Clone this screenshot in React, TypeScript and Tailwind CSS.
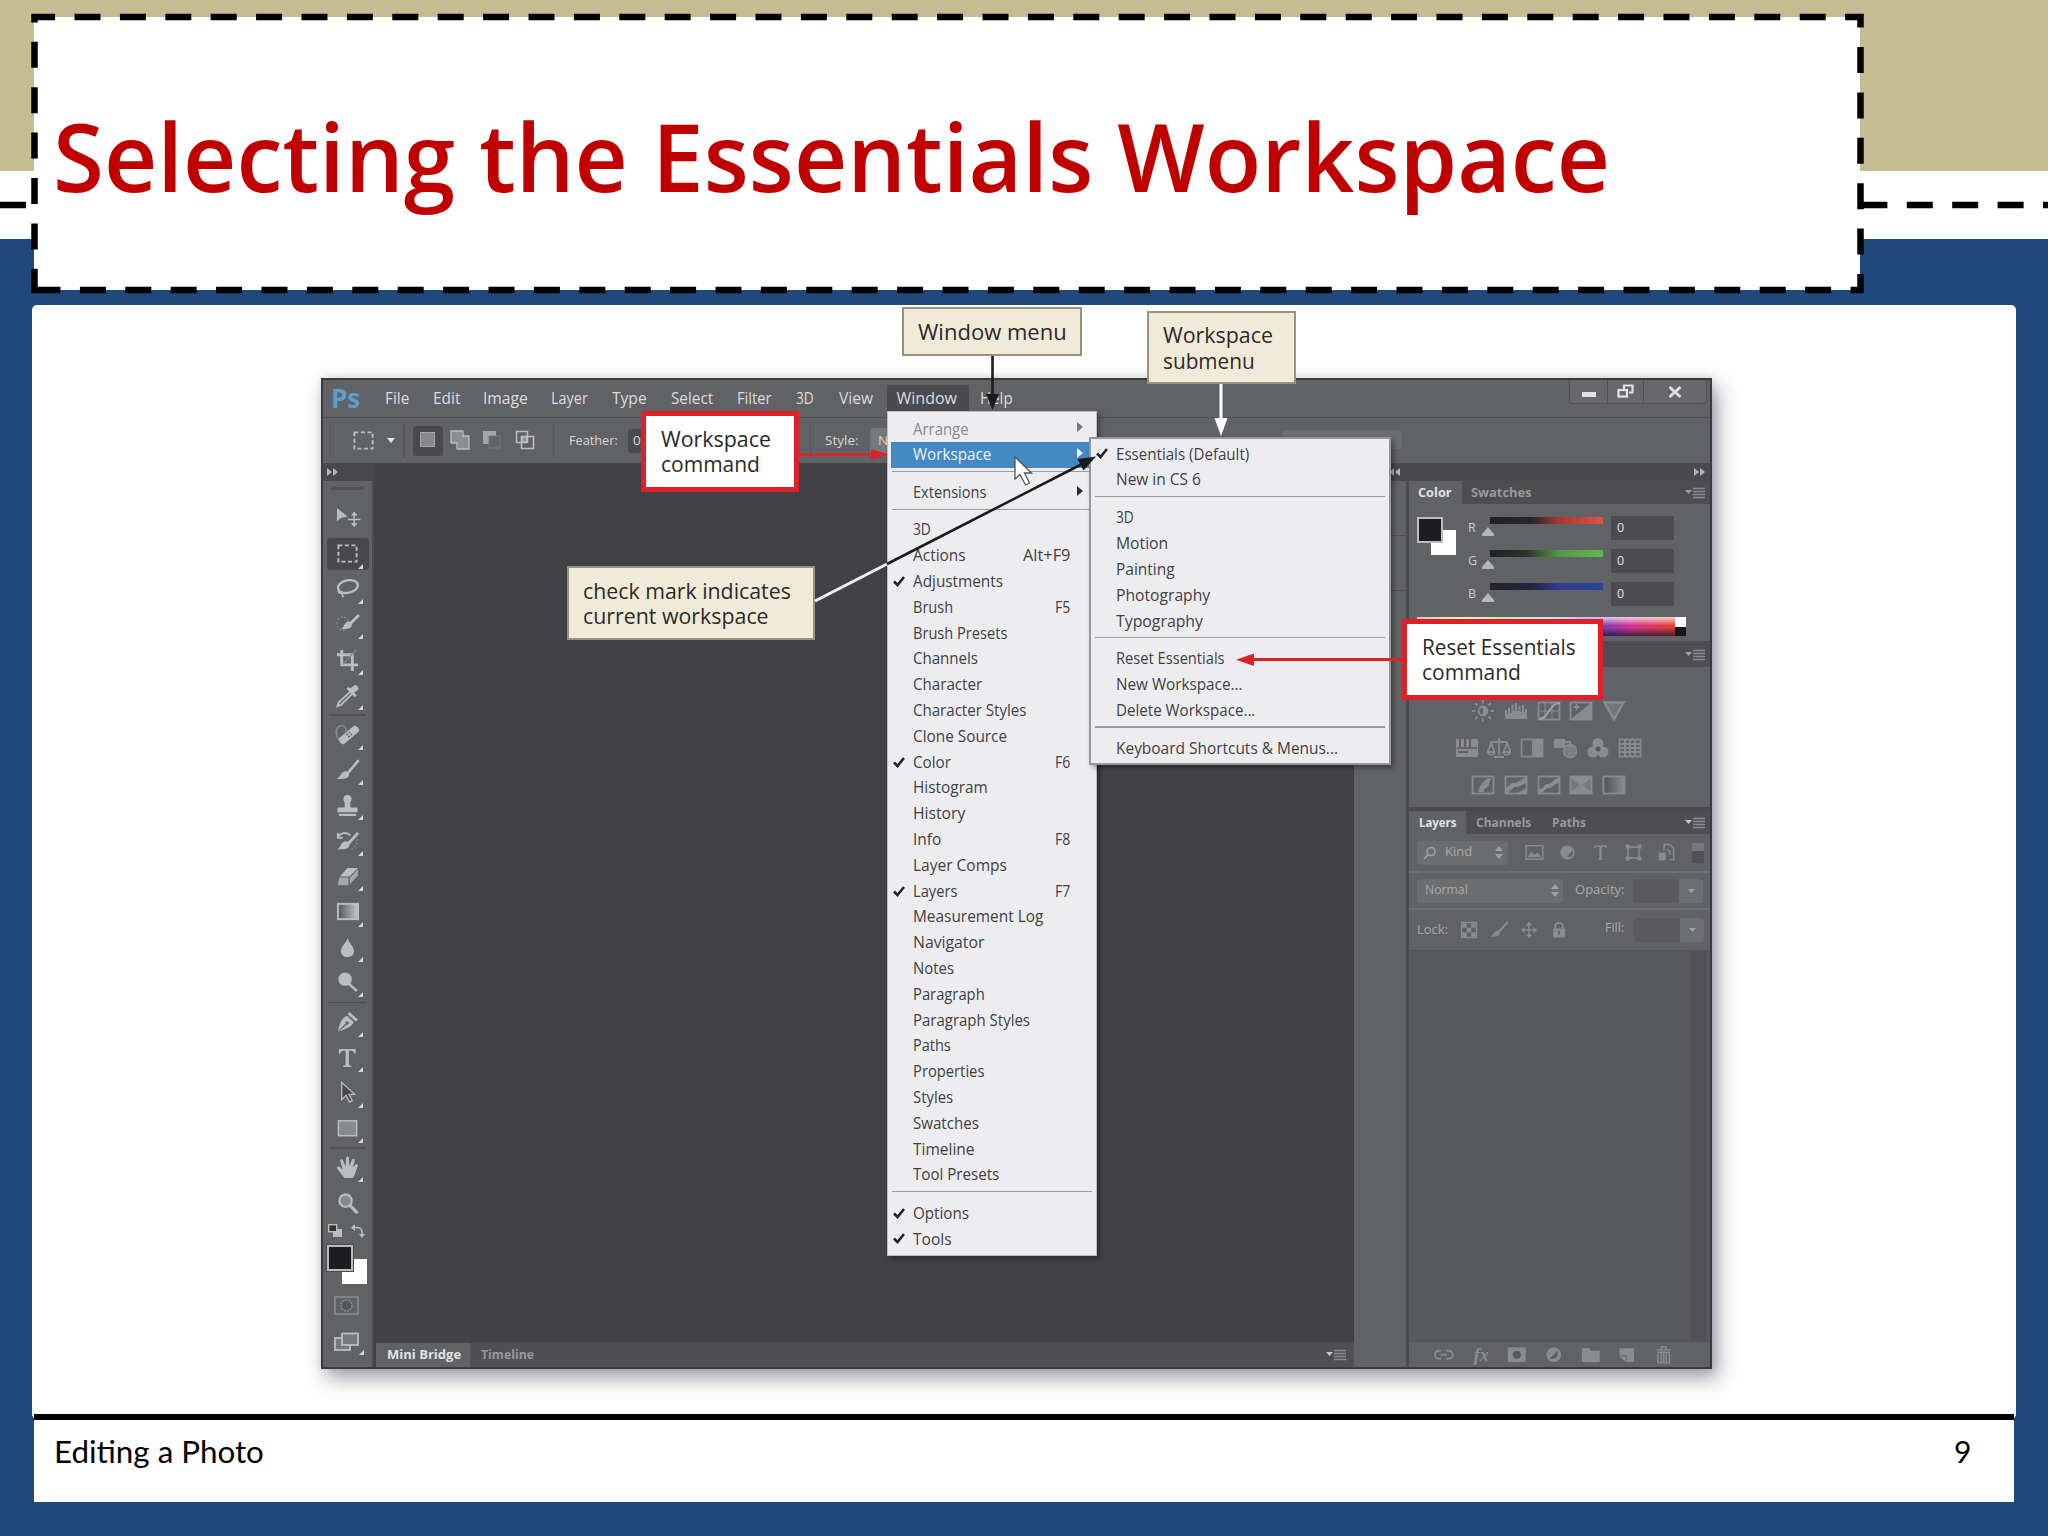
import React, { useLayoutEffect, useRef, useState } from "react";

/* Text stretched horizontally to a known width. */
function Fit({ w, children }: { w: number; children: React.ReactNode }) {
  const ref = useRef<HTMLSpanElement>(null);
  const [scale, setScale] = useState(1);
  useLayoutEffect(() => {
    if (ref.current) setScale(w / ref.current.offsetWidth);
  }, [w]);
  return (
    <span className="inline-block shrink-0 whitespace-nowrap text-left" style={{ width: w }}>
      <span ref={ref} className="inline-block origin-left" style={{ transform: `scaleX(${scale})` }}>
        {children}
      </span>
    </span>
  );
}

const L = "#bcbdbf";
const D = "#8b8c8f";

function Icon({ children, size = 24, className = "" }: { children: React.ReactNode; size?: number; className?: string }) {
  return (
    <svg width={size} height={size} viewBox="0 0 24 24" fill="none" className={"block shrink-0 " + className}>
      {children}
    </svg>
  );
}

const marquee = <rect x="2.5" y="3.5" width="19" height="17" stroke={L} strokeWidth="2" strokeDasharray="4.2 2.6" />;
const brush = (
  <>
    <path d="M23 2 12.5 14.5" stroke={L} strokeWidth="2.6" strokeLinecap="round" />
    <path d="M12.5 13.5c2 2.5 1 5.500-2 6.500-3 1-7 1-10 .5 3-1 3-2 5-5 1.500-2.500 5-3.500 7-2z" fill={L} />
  </>
);

const tools: ({ icon: React.ReactNode; selected?: boolean; flyout?: boolean } | "sep")[] = [
  { icon: <><path d="M1 1v14l4-3.500 7-1.500z" fill={L} /><path d="M19 6.500v13M12.500 13h13M19 6l-2 2.500h4zM19 20l-2-2.500h4z" stroke={L} strokeWidth="1.500" /></> },
  { icon: marquee, selected: true, flyout: true },
  { icon: <><ellipse cx="12.500" cy="9" rx="10.500" ry="6.500" stroke={L} strokeWidth="2.400" transform="rotate(-12 12 9)" /><path d="M3 12c-2 3 2 5 4 3M5.500 14l2 6" stroke={L} strokeWidth="1.800" /></>, flyout: true },
  { icon: <><ellipse cx="7" cy="11" rx="6" ry="7" stroke={D} strokeWidth="1.400" strokeDasharray="2 2" /><path d="M24 2 15 11" stroke={L} strokeWidth="3" /><path d="M15 9.500c3 3 1 6-2 6.800-3 .7-5 .7-8 0 3-1 2.500-2.500 4.500-5 1.500-2 4-3 5.500-1.800z" fill={L} /></>, flyout: true },
  { icon: <><path d="M6 1v15.500h17M1 6h16v17" stroke={L} strokeWidth="3" /><path d="M7 16 21 1" stroke={D} strokeWidth="1.300" /></>, flyout: true },
  { icon: <><path d="m15 8-12 11-1.500 4 4-1.500L17 10" stroke={L} strokeWidth="2" /><path d="m11 5 9 9 1.500-2-2.500-3 4-3c1.500-2-2-6-4-4.500l-4 3-2-1.500z" fill={L} /></>, flyout: true },
  "sep",
  { icon: <><path d="M9 19C-2 20-2 3 5 3c4-1 6 2 5 6" stroke={D} strokeWidth="1.600" /><rect x="1.500" y="8.500" width="24" height="8" rx="3" fill={L} transform="rotate(-40 13.500 12.500)" /><g fill="#66676a"><circle cx="11.500" cy="12" r="1" /><circle cx="14" cy="10" r="1" /><circle cx="13.500" cy="14" r="1" /><circle cx="16" cy="12" r="1" /></g></>, flyout: true },
  { icon: brush, flyout: true },
  { icon: <><path d="M12 1c5 0 5 5 3 7.500V14h7.500v5h-21v-5H9V8.500C7 6 7 1 12 1zM3 20.500h18V23H3z" fill={L} /></>, flyout: true },
  { icon: <><path d="M2 6.500c4-4 9-4 13-1M2 3v5h5" stroke={L} strokeWidth="2" /><path d="M23 3 13 14" stroke={L} strokeWidth="3" /><path d="M13 12.500c3 3 0 7-4 7.500H1c3-1.500 3-3 5-6 2-2 5-3 7-1.500z" fill={L} /><path d="M22 9c1 6-2 10-8 12" stroke={D} strokeWidth="1.500" strokeDasharray="2 2" /></>, flyout: true },
  { icon: <><path d="M12 3h11l-9 9H4z" fill={L} /><path d="M3.500 13H13v8H1.500zM14.500 13 23 4.500V11l-8.500 9z" fill="#a6a7a9" /></>, flyout: true },
  { icon: <><defs><linearGradient id="gt"><stop stopColor="#55565a" /><stop offset="1" stopColor="#c4c5c7" /></linearGradient></defs><rect x="2" y="4" width="21" height="16" fill="url(#gt)" stroke={L} strokeWidth="2" /></>, flyout: true },
  { icon: <path d="M12 2c1 5 7 9 7 14a7 6 0 0 1-14 0c0-5 6-9 7-14z" fill={L} />, flyout: true },
  { icon: <><circle cx="9.500" cy="8.500" r="7" fill={L} /><path d="m13 13 9 8" stroke={L} strokeWidth="2.600" /></>, flyout: true },
  "sep",
  { icon: <><path d="m14 1 9 8-2.500 2-8.500-8zM11.500 5l7 6.500C16 18 9 18.500 2 22c1-7 3-14 9.500-17z" fill={L} /><path d="m2.500 21.500 8-8" stroke="#606164" strokeWidth="1.300" /><circle cx="11.500" cy="12.500" r="1.800" fill="#606164" /></>, flyout: true },
  { icon: <path d="M3 3h17.500v5H19c-.5-2-1-3-3-3h-2.500v14c0 1 1 1.500 2.500 1.500v1.500H7.500v-1.500c1.500 0 2.500-.5 2.500-1.500V5H7.500c-2 0-2.500 1-3 3H3z" fill={L} />, flyout: true },
  { icon: <path d="M6 1.500v18l4.500-4.500 3.500 7 3-1.500-3.500-6.500h6z" fill="#47474b" stroke={L} strokeWidth="1.300" />, flyout: true },
  { icon: <rect x="2.500" y="4" width="19" height="15.500" fill="#88898b" stroke={L} strokeWidth="1.600" />, flyout: true },
  "sep",
  { icon: <path d="M9 23c-2-2-5-7-8-10-1-2 2-3 4-.5L7 14 4.500 5.500C4 3 7 2.500 7.500 5L10 11l.5-8.500c0-2.500 3-2.500 3 0L14 11l2.500-7c1-2.200 3.500-1.200 3 1L17.500 12l2.500-3c1.500-1.500 3.500 0 2.500 2-2 5-2.500 9-5 12z" fill={L} />, flyout: true },
  { icon: <><circle cx="10" cy="9" r="6.500" fill="#88898b" stroke={L} strokeWidth="2.200" /><path d="m14.500 14 8 8" stroke={L} strokeWidth="3.400" /></> },
];

function Toolbar() {
  return (
    <div className="flex w-[51px] shrink-0 flex-col border-r-2 border-[#4d4d51] bg-[#606263]">
      <div className="mx-[8px] mt-[6px] h-[3px] shrink-0 bg-[#505054]" />
      <div className="flex flex-col pt-[10.900px]">
        {tools.map((t, i) =>
          t === "sep" ? (
            <div key={i} className="mx-[6px] flex h-[4px] shrink-0 items-center">
              <div className="h-[1.500px] w-full bg-[#505054]" />
            </div>
          ) : (
            <div key={i} className="relative flex h-[35.400px] shrink-0 items-center justify-center pr-[1px]">
              {t.selected && <div className="absolute left-[4px] top-[2px] h-[32px] w-[42px] rounded-[3px] bg-[#49494d]" />}
              <Icon size={23} className="relative overflow-visible">{t.icon}</Icon>
              {t.flyout && (
                <svg className="absolute bottom-[3px] right-[9px]" width="5" height="5"><path d="M5 0v5H0z" fill="#d8d8da" /></svg>
              )}
            </div>
          ),
        )}
      </div>
      <div className="mt-[1px] flex h-[18px] items-center justify-between pl-[5px] pr-[7px]">
        <svg width="14" height="13" viewBox="0 0 14 13"><rect x="5" y="5" width="9" height="8" fill={L} /><rect x=".7" y=".7" width="8" height="7" fill="#333" stroke={L} strokeWidth="1.400" /></svg>
        <svg width="14" height="14" viewBox="0 0 14 14" fill="none"><path d="M2 3.500h4c3 0 5 2 5 5V12" stroke={L} strokeWidth="1.600" /><path d="M0 3.500 4 0v7zM11 14 8 10h6z" fill={L} /></svg>
      </div>
      <div className="relative mt-[5px] h-[40px]">
        <div className="absolute left-[19px] top-[14px] h-[25px] w-[25px] bg-white" />
        <div className="absolute left-[4px] top-0 h-[26px] w-[26px] border-2 border-[#bdbdbf] bg-[#1d1d1f] ring-1 ring-[#4b4b4f]" />
      </div>
      <div className="mt-[11px] flex justify-center pr-[3px]">
        <svg width="25" height="19" viewBox="0 0 25 19" fill="none"><rect x="1" y="1" width="23" height="17" stroke={D} strokeWidth="1.600" /><circle cx="12.500" cy="9.500" r="5.500" fill="#55565a" stroke={D} strokeWidth="1.600" strokeDasharray="2 1" /></svg>
      </div>
      <div className="relative mt-[17px] flex justify-center pr-[3px]">
        <svg width="25" height="20" viewBox="0 0 25 20" fill="none"><rect x="1" y="6" width="15" height="12" fill="#77787a" stroke={L} strokeWidth="1.800" /><rect x="8" y="1.500" width="16" height="11.500" fill="#77787a" stroke={L} strokeWidth="1.800" /></svg>
        <svg className="absolute -bottom-[3px] right-[8px]" width="5" height="5"><path d="M5 0v5H0z" fill="#d8d8da" /></svg>
      </div>
    </div>
  );
}

const menus: [string, number, number][] = [
  ["File", 61.5, 24], ["Edit", 24, 27], ["Image", 23, 45], ["Layer", 23, 37], ["Type", 24, 35],
  ["Select", 24, 42], ["Filter", 24, 35], ["3D", 24, 18], ["View", 25, 34],
];

function MenuBar() {
  return (
    <div className="flex h-[38px] shrink-0 border-b border-[#505054] bg-[#616265] font-['Open_Sans',sans-serif] text-[16px] text-[#dcdcde]">
      <div className="flex h-[35px] items-center">
        <div className="-mr-[34px] w-[34px]">
          <span className="block pl-[8px] font-['Open_Sans',sans-serif] text-[26px] font-bold leading-[34px] text-[#5d9fcb]"><Fit w={29}>Ps</Fit></span>
        </div>
        {menus.map(([t, gap, w]) => (
          <span key={t} className="flex" style={{ marginLeft: gap }}><Fit w={w}>{t}</Fit></span>
        ))}
        <div className="ml-[14px] mt-[1px] flex h-[27px] w-[82px] items-center bg-[#4b4b4f] pl-[10px]"><Fit w={60}>Window</Fit></div>
        <span className="ml-[11px] flex"><Fit w={33}>Help</Fit></span>
      </div>
      <div className="ml-auto mr-[3px] flex h-[24px] gap-px rounded-b-[4px] bg-[#505054] px-px pb-px">
        <div className="flex w-[37px] items-end justify-center rounded-bl-[3px] bg-[#68686c] pb-[6px]"><div className="h-[5px] w-[14px] bg-[#e2e2e4]" /></div>
        <div className="flex w-[35px] items-center justify-center bg-[#68686c]">
          <svg width="17" height="15" viewBox="0 0 17 15" fill="none" stroke="#e2e2e4" strokeWidth="2.200"><path d="M7 5V1.500h8.500v7H12" /><rect x="1.500" y="6" width="8.500" height="6.500" /></svg>
        </div>
        <div className="flex w-[62px] items-center justify-center rounded-br-[3px] bg-[#68686c]">
          <svg width="14" height="12" viewBox="0 0 14 12"><path d="m1.500 1 11 10m0-10-11 10" stroke="#e2e2e4" strokeWidth="2.800" /></svg>
        </div>
      </div>
    </div>
  );
}

function OptionsBar() {
  return (
    <div className="flex h-[45px] shrink-0 items-center bg-[#616265] font-['Open_Sans',sans-serif] text-[13.500px] text-[#d6d6d8]">
      <div className="ml-[7px] h-[34px] w-px bg-[#58585b]" />
      <Icon size={23} className="ml-[21px]">{marquee}</Icon>
      <svg className="ml-[12px]" width="8" height="5"><path d="M0 0h8L4 5z" fill="#e4e4e6" /></svg>
      <div className="ml-[8px] h-[34px] w-[1.500px] bg-[#56565a]" />
      <div className="ml-[8px] flex h-[30px] w-[30px] items-center justify-center rounded-[3px] bg-[#49494d]"><div className="mb-[3px] h-[15px] w-[15px] border border-[#a8a8aa] bg-[#88898b]" /></div>
      <svg className="mb-[2px] ml-[7px]" width="20" height="20" viewBox="0 0 20 20"><path d="M1 1h12v5h6v13H7v-6H1z" fill="#8d8e90" stroke={L} strokeWidth="1.300" /></svg>
      <svg className="mb-[2px] ml-[12px]" width="20" height="20" viewBox="0 0 20 20"><path d="M1 1h13v5H7v8H1z" fill="#a4a5a7" /><path d="M7 6h11v12H7z" fill="none" stroke="#77787a" /></svg>
      <svg className="mb-[2px] ml-[13px]" width="20" height="20" viewBox="0 0 20 20" fill="none" stroke={L} strokeWidth="1.600"><path d="M1.500 1.500h11v11h-11zM6.500 6.500h12v12h-12z" /><path d="M7 7h5v5H7z" fill="#8d8e90" /></svg>
      <div className="ml-[18px] h-[34px] w-[1.500px] bg-[#56565a]" />
      <span className="ml-[15px] flex"><Fit w={49}>Feather:</Fit></span>
      <div className="ml-[10px] flex h-[24px] w-[120px] items-center rounded-[3px] bg-[#4b4b4f] pl-[5px]">0</div>
      <div className="ml-[62px] h-[34px] w-px bg-[#56565a]" />
      <span className="ml-[14px] flex"><Fit w={34}>Style:</Fit></span>
      <div className="ml-[11px] flex h-[26px] w-[120px] items-center rounded-[3px] bg-[#77787a] pl-[8px]">N</div>
      <div className="ml-[292px] mt-[12px] h-[19px] w-[120px] self-start rounded-t-[4px] bg-[#6c6d70]" />
    </div>
  );
}

function PanelMenu({ bright = false }: { bright?: boolean }) {
  return (
    <svg width="20" height="12" viewBox="0 0 20 12">
      <path d="M0 3h7L3.500 7z" fill={bright ? "#c9c9cb" : "#a0a1a3"} />
      <path d="M8 1.500h12M8 4.500h12M8 7.500h12M8 10.500h12" stroke="#8b8c8e" strokeWidth="1.500" />
    </svg>
  );
}

const sliders: [string, string][] = [
  ["R", "bg-[linear-gradient(90deg,#222226_0%,#2b2729_38%,#a83a32_62%,#e05245_100%)]"],
  ["G", "bg-[linear-gradient(90deg,#222226_0%,#2b332b_32%,#549a45_62%,#62b552_100%)]"],
  ["B", "bg-[linear-gradient(90deg,#222226_0%,#25254a_38%,#2f3c8c_62%,#2b43a0_100%)]"],
];

function ColorPanel() {
  return (
    <div className="h-[160px] shrink-0 font-['Open_Sans',sans-serif]">
      <div className="flex h-[23px] items-center bg-[#4e4e52] text-[12px] font-bold">
        <div className="flex h-full w-[53px] items-center bg-[#616265] pl-[9px] text-[#e2e2e4]"><Fit w={34}>Color</Fit></div>
        <span className="ml-[9px] flex text-[#98999c]"><Fit w={60}>Swatches</Fit></span>
        <span className="ml-auto mr-[5px]"><PanelMenu /></span>
      </div>
      <div className="flex pl-[8px] pt-[12px]">
        <div className="relative mt-[1px] h-[40px] w-[51px] shrink-0">
          <div className="absolute left-[14px] top-[13px] h-[25px] w-[25px] bg-white" />
          <div className="absolute left-0 top-0 h-[26px] w-[26px] border-2 border-[#bdbdbf] bg-[#1d1d1f]" />
        </div>
        <div className="flex flex-col gap-[9px]">
          {sliders.map(([c, bg]) => (
            <div key={c} className="flex h-[24px] items-start text-[12.500px] leading-[24px] text-[#cfcfd1]">
              <span className="w-[22px]">{c}</span>
              <div className="relative mt-[1px] h-[7px] w-[113px]">
                <div className={"h-full w-full " + bg} />
                <svg className="absolute -left-[8px] top-[10px]" width="12" height="9"><path d="M6 0 12 7v2H0V7z" fill="#b4b5b7" /></svg>
              </div>
              <div className="ml-[8px] h-[24px] w-[63px] bg-[#4c4c50] pl-[6px] text-[#e2e2e4]">0</div>
            </div>
          ))}
        </div>
      </div>
      <div className="ml-[8px] mt-[11px] flex h-[19px] w-[269px]">
        <div className="flex-1 bg-[linear-gradient(180deg,rgba(255,255,255,0.75)_0%,rgba(255,255,255,0)_45%,rgba(0,0,0,0)_55%,rgba(20,20,40,0.75)_100%),linear-gradient(90deg,#e33_0%,#ee3_16%,#3c3_33%,#3cc_50%,#44c_66%,#d2348f_83%,#e5402e_100%)]" />
        <div className="flex w-[11px] flex-col"><div className="h-1/2 bg-white" /><div className="h-1/2 bg-[#17171a]" /></div>
      </div>
    </div>
  );
}

const s = { stroke: D, strokeWidth: 1.8 };
const adjust: React.ReactNode[][] = [
  [
    <><circle cx="12" cy="12" r="4.500" {...s} /><path d="M12 7.500a4.500 4.500 0 0 1 0 9z" fill={D} /><path d="M12 1v3.500M12 19.500V23M1 12h3.500M19.500 12H23M4 4l2.500 2.500M17.500 17.500 20 20M4 20l2.500-2.500M17.500 6.500 20 4" {...s} /></>,
    <path d="M1 20v-9h2v4h1V9h2v5h1.500V6h2v6H11V4h2v8h1.500V7h2v6H18V6h2v7h1v-3h2v10z" fill={D} />,
    <><rect x="1.500" y="3.500" width="21" height="17" {...s} /><path d="M1 12h22M8 3v17M15 3v17" stroke={D} /><path d="M2 20c10 0 10-16 21-16" stroke="#a0a1a3" strokeWidth="2" /></>,
    <><rect x="1.500" y="3.500" width="21" height="17" {...s} /><path d="M2 20 22 4v16z" fill={D} /><path d="M4.500 8h6M7.500 5v6" {...s} /></>,
    <><path d="M1 2.500h22L12 22z" fill="#737477" /><path d="M2.500 3.500h19L12 20z" stroke={D} strokeWidth="2.400" /></>,
  ],
  [
    <><rect x="1" y="3" width="22" height="18" fill={D} /><path d="M5 3v8M10 3v8M15 3v8M2 12h20M3 16h10" stroke="#55565a" strokeWidth="1.600" /></>,
    <path d="M12 2v17M4 6h16M7 21h10M4 7l-3.500 9h7zM20 7l-3.500 9h7zM1 17c1 2.500 5.500 2.500 6.500 0M16.500 17c1 2.500 5.500 2.500 6.500 0" {...s} />,
    <><rect x="1.500" y="3.500" width="21" height="17" {...s} /><path d="M12 3h11v18H12z" fill={D} /></>,
    <><path d="M1 3h11v9H1z" fill={D} /><circle cx="17" cy="15" r="6.500" fill="#7d7e80" stroke={D} strokeWidth="1.500" /><path d="M8 6h9v5" {...s} /></>,
    <><circle cx="12" cy="7.500" r="5.500" fill={D} /><circle cx="7" cy="16" r="5.500" fill={D} /><circle cx="17" cy="16" r="5.500" fill={D} /><circle cx="12" cy="13" r="2.500" fill="#55565a" /></>,
    <><rect x="1.500" y="3.500" width="21" height="17" {...s} /><path d="M7 3v18M12 3v18M17 3v18M1 8h22M1 12h22M1 16h22" {...s} /></>,
  ],
  [
    <><rect x="1.500" y="3.500" width="21" height="17" {...s} /><path d="M20 5c-6 0-12 8-13 14h6c-1-5 4-3 5-8z" fill={D} /></>,
    <><rect x="1.500" y="3.500" width="21" height="17" {...s} /><path d="M2 20v-5l6-5h4l10-6v6l-8 4h-4l-6 6zM14 20l8-5v5z" fill={D} /></>,
    <><rect x="1.500" y="3.500" width="21" height="17" {...s} /><path d="M2 16c6 0 4-5 9-5s5-6 12-6v5c-6 0-6 5-11 5s-4 5-10 5z" fill={D} /></>,
    <><rect x="1.500" y="3.500" width="21" height="17" fill="#77787a" {...s} /><path d="M2 4l10 8L22 4M2 20l10-8 10 8z" fill={D} {...s} /></>,
    <><defs><linearGradient id="ga"><stop stopColor="#505154" /><stop offset="1" stopColor={D} /></linearGradient></defs><rect x="1.500" y="3.500" width="21" height="17" fill="url(#ga)" {...s} /></>,
  ],
];

function Spin() {
  return <svg width="8" height="13" viewBox="0 0 8 13"><path d="M0 5 4 0l4 5zM0 8l4 5 4-5z" fill="#9fa0a2" /></svg>;
}

function ValueField() {
  return (
    <div className="flex h-[24px] w-[70px] overflow-hidden rounded-[3px] bg-[#5a5a5d]">
      <div className="ml-auto flex w-[24px] items-center justify-center bg-[#6e6f71]"><svg width="7" height="4"><path d="M0 0h7L3.500 4z" fill="#a0a1a3" /></svg></div>
    </div>
  );
}

const filterIcons: React.ReactNode[] = [
  <><rect x="1.500" y="3.500" width="21" height="17" {...s} /><path d="m3 18 5-7 4 4 4-3 5 6z" fill={D} /></>,
  <><circle cx="12" cy="12" r="9" fill={D} /><path d="M11 17 18.500 9c2 5-1.500 10-7.500 8z" fill="#616265" /></>,
  <path d="M4 3h16v5l-2-3h-4.500v14l2 2h-7l2-2V5H6L4 8z" fill={D} />,
  <><path d="M5 5h14v14H5z" {...s} /><path d="M2 2h5v5H2zM17 2h5v5h-5zM2 17h5v5H2zM17 17h5v5h-5z" fill={D} /></>,
  <><path d="M9 9V2h7l5 5v14h-5" {...s} /><path d="M2 12h9v10H2z" fill={D} /><path d="M12 8c4 1 5 3 4 7" {...s} /></>,
];

const lockIcons: React.ReactNode[] = [
  <><rect x="2" y="2" width="20" height="20" {...s} /><path d="M3 3h6v6H3zM15 3h6v6h-6zM9 9h6v6H9zM3 15h6v6H3zM15 15h6v6h-6z" fill={D} /></>,
  <><path d="M24 1 12 14" stroke={D} strokeWidth="2.600" /><path d="M12 13c2 3 1 6-3 7-3 1-6 1-9 .5 3-1 4-2.500 5.500-5C7 13 10 12 12 13z" fill={D} /></>,
  <path d="M12 1 8 6h3v5H6V8l-5 4 5 4v-3h5v5H8l4 5 4-5h-3v-5h5v3l5-4-5-4v3h-5V6h3z" fill={D} />,
  <><path d="M7 11V7c0-6 10-6 10 0v4" stroke={D} strokeWidth="2.500" /><rect x="4" y="10" width="16" height="12" rx="1" fill={D} /><path d="M12 13v5" stroke="#55565a" strokeWidth="2" /></>,
];

const footIcons: React.ReactNode[] = [
  <path d="M9 7H6a5 5 0 0 0 0 10h3M15 7h3a5 5 0 0 1 0 10h-3M8 12h8" stroke={D} strokeWidth="2.400" />,
  null,
  <><rect x="1" y="3" width="22" height="18" fill={D} /><circle cx="12" cy="12" r="5" fill="#58595b" /></>,
  <><circle cx="12" cy="12" r="9" fill={D} /><path d="M7 17 16 7c3 5 0 11-9 10z" fill="#606164" /></>,
  <path d="M1 4h9l2 3h11v14H1z" fill={D} />,
  <><path d="M3 4h18v17h-9v-8H3z" fill={D} /><path d="M3 14h8v7z" fill={D} /></>,
  <><path d="M3 6h18M9 6V2.500h6V6M5 9h14v13H5zM9 9v13M12 9v13M15 9v13" {...s} /></>,
];

function RightPanels() {
  return (
    <div className="flex w-[301px] shrink-0 flex-col bg-[#616265] font-['Open_Sans',sans-serif]">
      <div className="flex h-[18px] shrink-0 items-center justify-end bg-[#4b4a4e] pr-[5px]">
        <svg width="11" height="8"><path d="M0 0l5 4-5 4zM6 0l5 4-5 4z" fill="#b4b5b7" /></svg>
      </div>
      <ColorPanel />
      <div className="flex h-[26px] shrink-0 items-center justify-end border-b border-[#505054] bg-[#4e4e52] pr-[5px] pt-[3px]"><PanelMenu /></div>
      <div className="flex h-[140px] shrink-0 flex-col items-center gap-[13px] pr-[22px] pt-[32px]">
        {adjust.map((row, i) => (
          <div key={i} className="flex gap-[8.700px]">
            {row.map((ic, j) => <Icon key={j}>{ic}</Icon>)}
          </div>
        ))}
      </div>
      <div className="h-[4px] shrink-0 bg-[#4a4a4e]" />
      <div className="flex h-[23px] shrink-0 items-center bg-[#4e4e52] text-[12px] font-bold text-[#98999c]">
        <div className="flex h-full w-[57px] items-center bg-[#616265] pl-[10px] text-[#e2e2e4]"><Fit w={37}>Layers</Fit></div>
        <span className="ml-[10px] flex"><Fit w={55}>Channels</Fit></span>
        <span className="ml-[21px] flex"><Fit w={34}>Paths</Fit></span>
        <span className="ml-auto mr-[5px]"><PanelMenu bright /></span>
      </div>
      <div className="flex h-[39px] shrink-0 items-center border-b-2 border-[#6f7072] pl-[8px] text-[12.500px] text-[#a9aaac]">
        <div className="flex h-[24px] w-[91px] items-center rounded-[3px] bg-[#6c6d6f] pl-[6px] pr-[5px]">
          <svg width="14" height="14" viewBox="0 0 14 14" fill="none"><circle cx="8" cy="5.500" r="4" stroke="#a0a1a3" strokeWidth="1.600" /><path d="M5 8.500 1 13" stroke="#a0a1a3" strokeWidth="1.800" /></svg>
          <span className="ml-[8px] flex"><Fit w={27}>Kind</Fit></span>
          <span className="ml-auto"><Spin /></span>
        </div>
        <div className="ml-[17px] flex gap-[14px]">{filterIcons.map((ic, i) => <Icon key={i} size={19}>{ic}</Icon>)}</div>
        <div className="ml-[16px] h-[20px] w-[12px] bg-[#515154]"><div className="h-[8px] bg-[#78797b]" /></div>
      </div>
      <div className="flex h-[37px] shrink-0 items-center border-b-2 border-[#6f7072] pl-[8px] text-[12.500px] text-[#a9aaac]">
        <div className="flex h-[24px] w-[146px] items-center rounded-[3px] bg-[#6c6d6f] pl-[8px] pr-[4px]">
          <Fit w={43}>Normal</Fit><span className="ml-auto"><Spin /></span>
        </div>
        <span className="ml-[12px] flex"><Fit w={49}>Opacity:</Fit></span>
        <span className="ml-[9px]"><ValueField /></span>
      </div>
      <div className="flex h-[40px] shrink-0 items-center pl-[8px] text-[12.500px] text-[#a9aaac]">
        <Fit w={31}>Lock:</Fit>
        <div className="ml-[12px] flex gap-[12px]">{lockIcons.map((ic, i) => <Icon key={i} size={18}>{ic}</Icon>)}</div>
        <span className="mb-[3px] ml-[37px] flex"><Fit w={19}>Fill:</Fit></span>
        <span className="ml-[10px]"><ValueField /></span>
      </div>
      <div className="flex flex-1 justify-end border-y border-[#535457] bg-[#58595b]"><div className="mr-[3px] w-[17px] bg-[#525255]" /></div>
      <div className="flex h-[25px] shrink-0 items-center gap-[17.200px] pl-[25px]">
        {footIcons.map((ic, i) =>
          ic ? <Icon key={i} size={19.5}>{ic}</Icon> : <span key={i} className="w-[19.500px] pl-[3px] font-['Liberation_Serif',serif] text-[18px] font-bold italic leading-none text-[#8b8c8f]">fx</span>,
        )}
      </div>
    </div>
  );
}

type Row = { t: string; w: number; k?: string; kw?: number; on?: boolean; sub?: boolean; off?: boolean; hot?: boolean } | number;

function Check() {
  return <svg width="12" height="11" viewBox="0 0 12 11"><path d="M1 5.500 4.500 9 11 1" fill="none" stroke="#232326" strokeWidth="2.600" /></svg>;
}

/* A number in the list is a separator block of that height. */
function Menu({ rows, wide }: { rows: Row[]; wide?: boolean }) {
  return (
    <div className="flex flex-col font-['Open_Sans',sans-serif] text-[16px] leading-[25.800px] text-[#3f3f43]">
      {rows.map((r, i) =>
        typeof r === "number" ? (
          <div key={i} className="shrink-0 px-[4px] pt-[3px]" style={{ height: r }}><div className="h-[1.500px] bg-[#9c9c9f]" /></div>
        ) : (
          <div key={i} className={"mx-[3px] flex h-[25.800px] shrink-0 items-center " + (r.hot ? "bg-[#4389c4] text-[#eef3f8]" : r.off ? "text-[#88888c]" : "")}>
            <span className={wide ? "flex w-[21.500px] pl-[2px]" : "flex w-[21.500px] pl-[2px]"}>{r.on && <Check />}</span>
            <span className="flex pt-[1px]"><Fit w={r.w}>{r.t}</Fit></span>
            {r.k && <span className="ml-auto mr-[23px] flex pt-[1px]"><Fit w={r.kw || 15}>{r.k}</Fit></span>}
            {r.sub && (
              <svg className="mb-[4px] ml-auto mr-[10px]" width="6" height="10"><path d="M0 0 6 5 0 10z" fill={r.hot ? "#eef3f8" : r.off ? "#77777a" : "#2b2b2e"} /></svg>
            )}
          </div>
        ),
      )}
    </div>
  );
}

const windowRows: Row[] = [
  { t: "Arrange", w: 56, sub: true, off: true }, { t: "Workspace", w: 78, sub: true, hot: true }, 12.4,
  { t: "Extensions", w: 74, sub: true }, 11.2,
  { t: "3D", w: 18 }, { t: "Actions", w: 53, k: "Alt+F9", kw: 47 }, { t: "Adjustments", w: 90, on: true },
  { t: "Brush", w: 40, k: "F5" }, { t: "Brush Presets", w: 94 }, { t: "Channels", w: 65 }, { t: "Character", w: 69 },
  { t: "Character Styles", w: 113 }, { t: "Clone Source", w: 94 }, { t: "Color", w: 38, k: "F6", on: true },
  { t: "Histogram", w: 75 }, { t: "History", w: 52 }, { t: "Info", w: 28, k: "F8" }, { t: "Layer Comps", w: 94 },
  { t: "Layers", w: 44, k: "F7", on: true }, { t: "Measurement Log", w: 130 }, { t: "Navigator", w: 71 }, { t: "Notes", w: 41 },
  { t: "Paragraph", w: 72 }, { t: "Paragraph Styles", w: 117 }, { t: "Paths", w: 38 }, { t: "Properties", w: 71 },
  { t: "Styles", w: 40 }, { t: "Swatches", w: 66 }, { t: "Timeline", w: 62 }, { t: "Tool Presets", w: 86 }, 12.6,
  { t: "Options", w: 56, on: true }, { t: "Tools", w: 39, on: true },
];

const workspaceRows: Row[] = [
  { t: "Essentials (Default)", w: 133, on: true }, { t: "New in CS 6", w: 85 }, 12.4,
  { t: "3D", w: 18 }, { t: "Motion", w: 52 }, { t: "Painting", w: 59 }, { t: "Photography", w: 94 }, { t: "Typography", w: 87 }, 12,
  { t: "Reset Essentials", w: 109 }, { t: "New Workspace...", w: 127 }, { t: "Delete Workspace...", w: 139 }, 12.6,
  { t: "Keyboard Shortcuts & Menus...", w: 222 },
];

function AppWindow() {
  return (
    <div className="flex h-[991px] w-[1391px] flex-col border-2 border-[#3b3b3f] bg-[#424146] shadow-[6px_9px_18px_0px_rgba(60,55,75,0.48),0_0_8px_rgba(0,0,0,0.12)]">
      <MenuBar />
      <OptionsBar />
      <div className="flex min-h-0 flex-1">
        <div className="flex flex-col">
          <div className="flex h-[18px] w-[51px] shrink-0 items-center bg-[#48484c] pl-[4px]">
            <svg width="11" height="8"><path d="M0 0l5 4-5 4zM6 0l5 4-5 4z" fill="#b4b5b7" /></svg>
          </div>
          <div className="flex min-h-0 flex-1"><Toolbar /></div>
        </div>
        <div className="flex flex-1 flex-col bg-[#424146] pl-[2px]">
          <div className="flex-1" />
          <div className="flex h-[25px] items-center border-t border-[#4a494e] bg-[#504f53] font-['Open_Sans',sans-serif] text-[12.500px] font-bold">
            <div className="flex h-full w-[94px] items-center bg-[#616265] pl-[11px] text-[#e2e2e4]"><Fit w={74}>Mini Bridge</Fit></div>
            <span className="ml-[11px] flex text-[#97989b]"><Fit w={53}>Timeline</Fit></span>
            <span className="ml-auto mr-[8px]"><PanelMenu bright /></span>
          </div>
        </div>
        <div className="flex w-[55px] flex-col border-r-[3px] border-[#4a4a4e] bg-[#626365]">
          <div className="flex h-[18px] items-center justify-end bg-[#4b4a4e] pr-[6px]">
            <svg width="11" height="8"><path d="M5 0v8L0 4zM11 0v8L6 4z" fill="#b4b5b7" /></svg>
          </div>
          <div className="h-[55px] border-b border-[#505054]" />
          <div className="h-[55px] border-b border-[#505054]" />
        </div>
        <RightPanels />
      </div>
    </div>
  );
}

const tan = "absolute flex flex-col justify-center border-2 border-[#96927b] bg-[#f0ebd9] pl-[14px] pt-[2px]";
const red = "absolute flex flex-col justify-center border-[5px] border-[#df2028] bg-white pl-[15px] pt-[1px]";

export default function App() {
  return (
    <div className="relative flex h-[1536px] w-[2048px] flex-col overflow-hidden bg-[#20487b] text-black">
      <div className="h-[171px] shrink-0 bg-[#c4bd94]" />
      <div className="h-[68px] shrink-0 bg-white" />
      <div className="h-[66px] shrink-0" />
      <div className="ml-[32px] h-[1114px] w-[1984px] shrink-0 rounded-[5px] bg-[#fefefe]">
        <div className="ml-[289px] pt-[73px]"><AppWindow /></div>
      </div>
      <div className="z-10 -mt-[5px] ml-[34px] flex h-[88px] w-[1980px] shrink-0 items-start justify-between border-t-[6px] border-black bg-[#fefefe] pl-[20px] pr-[43px] pt-[10px] font-['Lato',sans-serif] text-[30px] leading-[42px]">
        <Fit w={210}>Editing a Photo</Fit>
        <Fit w={17}>9</Fit>
      </div>

      <div className="absolute left-[34px] top-[17px] flex h-[273px] w-[1826px] items-center bg-[#fefefe] pl-[19px] pt-[2px] font-['Open_Sans',sans-serif] text-[95px] font-semibold leading-[130px] text-[#c00000]">
        <Fit w={1557}>Selecting the Essentials Workspace</Fit>
      </div>
      <svg className="absolute left-0 top-0" width="2048" height="300" fill="none" stroke="#000" strokeWidth="6.500">
        <path d="M0 205H34M1861.400 205H2048" strokeDasharray="26 19.400" />
        <path d="M34.500 290H1860.500V17H34.500Z" strokeDasharray="26 19.400" />
      </svg>

      <div className="absolute left-[887px] top-[411px] h-[845px] w-[210px] border border-[#bcbcc0] bg-[#ededef] pt-[4px] shadow-[3px_3px_5px_rgba(0,0,0,0.35)]"><Menu rows={windowRows} /></div>
      <div className="absolute left-[1089px] top-[437px] h-[328px] w-[302px] border-2 border-[#97979b] bg-[#ededef] pt-[2px] shadow-[3px_3px_5px_rgba(0,0,0,0.35)]"><Menu rows={workspaceRows} wide /></div>

      <div className="font-['Open_Sans',sans-serif] text-[21px] font-medium leading-[25.500px] text-[#2c2a28]">
        <div className={tan + " left-[902px] top-[307px] h-[49px] w-[180px]"}><Fit w={149}>Window menu</Fit></div>
        <div className={tan + " left-[1147px] top-[311px] h-[73px] w-[149px]"}><Fit w={110}>Workspace</Fit><Fit w={92}>submenu</Fit></div>
        <div className={tan + " left-[567px] top-[566px] h-[74px] w-[248px]"}><Fit w={208}>check mark indicates</Fit><Fit w={186}>current workspace</Fit></div>
        <div className={red + " left-[641px] top-[411px] h-[81px] w-[158px]"}><Fit w={110}>Workspace</Fit><Fit w={99}>command</Fit></div>
        <div className={red + " left-[1402px] top-[619px] h-[81px] w-[201px]"}><Fit w={154}>Reset Essentials</Fit><Fit w={99}>command</Fit></div>
      </div>

      <svg className="absolute left-0 top-0" width="2048" height="800" fill="none">
        <path d="M992.500 356V400" stroke="#1b1b1d" strokeWidth="2.600" />
        <path d="M986 394h13l-6.500 16z" fill="#1b1b1d" />
        <path d="M1221 384V424" stroke="#fff" strokeWidth="3" />
        <path d="M1214.500 418h13l-6.500 18z" fill="#fff" />
        <path d="M799 454.500H876" stroke="#df2028" strokeWidth="2.600" />
        <path d="M871 449v11l17-5.500z" fill="#df2028" />
        <path d="M1402 659.500H1250" stroke="#df2028" strokeWidth="3" />
        <path d="M1254 653.500v12.500l-18-6.300z" fill="#df2028" />
        <path d="M815 601 887 564" stroke="#f4f4f4" strokeWidth="3" />
        <path d="M887 564 1084 463" stroke="#1b1b1d" strokeWidth="2.600" />
        <path d="M1096 456.500 1077.500 459 1083.500 470.500z" fill="#1b1b1d" />
        <path d="M1015 457v22l5-4.500 5.500 10.500 4-2-5-10h7z" fill="#fff" stroke="#555" strokeWidth="1.300" />
      </svg>
    </div>
  );
}
